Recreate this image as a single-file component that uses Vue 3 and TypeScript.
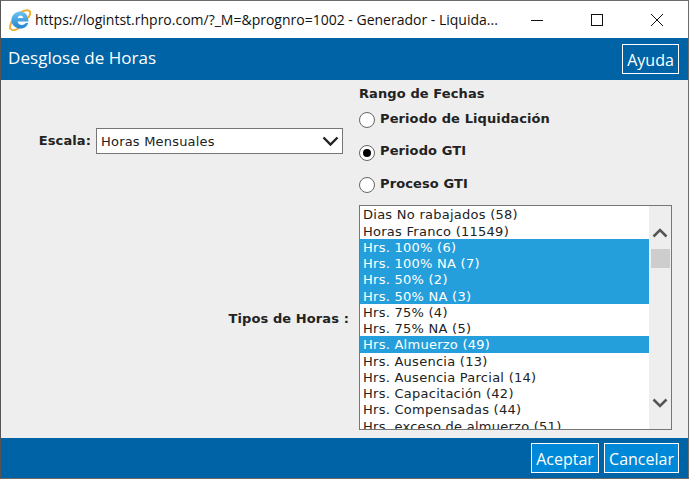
<script setup lang="ts">
const tipos = [
  { label: "Dias No rabajados (58)", sel: false },
  { label: "Horas Franco (11549)", sel: false },
  { label: "Hrs. 100% (6)", sel: true },
  { label: "Hrs. 100% NA (7)", sel: true },
  { label: "Hrs. 50% (2)", sel: true },
  { label: "Hrs. 50% NA (3)", sel: true },
  { label: "Hrs. 75% (4)", sel: false },
  { label: "Hrs. 75% NA (5)", sel: false },
  { label: "Hrs. Almuerzo (49)", sel: true },
  { label: "Hrs. Ausencia (13)", sel: false },
  { label: "Hrs. Ausencia Parcial (14)", sel: false },
  { label: "Hrs. Capacitación (42)", sel: false },
  { label: "Hrs. Compensadas (44)", sel: false },
  { label: "Hrs. exceso de almuerzo (51)", sel: false },
]

const rangos = [
  { label: "Periodo de Liquidación", checked: false },
  { label: "Periodo GTI", checked: true },
  { label: "Proceso GTI", checked: false },
]
</script>

<template>
  <div class="window">
    <div class="titlebar">
      <svg class="ie" width="22" height="22" viewBox="0 0 22 22">
        <defs>
          <linearGradient id="ieblue" x1="0" y1="0" x2="0" y2="1">
            <stop offset="0" stop-color="#6fc3f0" />
            <stop offset="1" stop-color="#2384d2" />
          </linearGradient>
        </defs>
        <path d="M1.500 20.500C0 17 3 11 7 7c5-5 11-7 13.500-5 1.500 1.500 0 5-1.500 7" fill="none" stroke="#efb02e" stroke-width="2" />
        <path d="M2 20c1.500 2 5 1 8-1" fill="none" stroke="#efb02e" stroke-width="1.800" />
        <path d="M2.500 11.500C2.500 6 6.500 2.500 11.200 2.500s8.300 3.500 8.300 10H8.700c.3 4 6 4.500 8 1.500h2.500c-1.500 5.500-8.300 7-12.500 4.300-2.700-1.600-4.200-4-4.200-6.800Zm6.200-2.500h5.600c-.3-3.500-5.100-3.500-5.600 0Z" fill="url(#ieblue)" fill-rule="evenodd" />
      </svg>
      <span class="url">https://logintst.rhpro.com/?_M=&amp;prognro=1002 - Generador - Liquida...</span>
      <div class="controls">
        <svg width="14" height="14" viewBox="0 0 14 14"><path d="M1 7.500h12" stroke="#111" fill="none" /></svg>
        <svg width="14" height="14" viewBox="0 0 14 14"><rect x="1.500" y="1.500" width="11" height="11" stroke="#111" fill="none" /></svg>
        <svg width="14" height="14" viewBox="0 0 14 14"><path d="M1 1l12 12M13 1L1 13" stroke="#111" fill="none" /></svg>
      </div>
    </div>

    <div class="header">
      <h1>Desglose de Horas</h1>
      <button class="btn help">Ayuda</button>
    </div>

    <div class="content">
      <div class="row-top">
        <div class="escala">
          <label>Escala:</label>
          <div class="select">
            <span>Horas Mensuales</span>
            <svg width="17" height="11" viewBox="0 0 17 11"><path d="M1.500 1.500L8.500 8.500l7-7" fill="none" stroke="#222" stroke-width="2.400" /></svg>
          </div>
        </div>
        <div class="rango">
          <div class="rango-title">Rango de Fechas</div>
          <div v-for="r in rangos" :key="r.label" class="radio-row">
            <span class="radio" :class="{ checked: r.checked }"></span>
            <span class="radio-text">{{ r.label }}</span>
          </div>
        </div>
      </div>

      <div class="row-list">
        <label>Tipos de Horas :</label>
        <div class="listbox">
          <div class="items">
            <div v-for="t in tipos" :key="t.label" class="item" :class="{ sel: t.sel }">{{ t.label }}</div>
          </div>
          <div class="scrollbar">
            <svg width="16" height="10" viewBox="0 0 16 10"><path d="M1.500 8.500L8 2l6.500 6.500" fill="none" stroke="#555" stroke-width="2.500" /></svg>
            <div class="thumb"></div>
            <svg class="down" width="16" height="10" viewBox="0 0 16 10"><path d="M1.500 1.500L8 8l6.500-6.500" fill="none" stroke="#555" stroke-width="2.500" /></svg>
          </div>
        </div>
      </div>
    </div>

    <div class="footer">
      <button class="btn action">Aceptar</button>
      <button class="btn action">Cancelar</button>
    </div>
  </div>
</template>

<style>
html, body {
  margin: 0;
  overflow: hidden;
}
</style>

<style scoped>
.window {
  width: 689px;
  height: 479px;
  box-sizing: border-box;
  border: 1px solid #6b6b6b;
  border-left-color: #555;
  display: flex;
  flex-direction: column;
  font-family: "DejaVu Sans", Verdana, sans-serif;
  font-size: 13px;
  color: #222;
  background: #eee;
}

.titlebar {
  height: 37px;
  flex-shrink: 0;
  background: #fff;
  display: flex;
  align-items: center;
  padding-left: 8px;
  font-family: "Open Sans", sans-serif;
  font-size: 14px;
  color: #111;
}

.ie {
  margin-right: 4px;
}

.url {
  white-space: nowrap;
  width: 465px;
  overflow: hidden;
}

.controls {
  margin-left: auto;
  display: flex;
  gap: 46px;
  padding-right: 24px;
}

.header {
  height: 42px;
  flex-shrink: 0;
  background: #0063a6;
  display: flex;
  align-items: center;
  justify-content: space-between;
  padding: 0 9px 0 7px;
}

h1 {
  margin: 0 0 3px;
  font-family: "Open Sans", sans-serif;
  font-weight: 400;
  font-size: 17px;
  letter-spacing: 0.05px;
  color: #fff;
}

.btn {
  font-family: "Open Sans", sans-serif;
  font-size: 16px;
  color: #fff;
  border: 1px solid #fff;
  padding: 1px 0 0;
  height: 30px;
}

.help {
  width: 57px;
  background: #0063a6;
}

.content {
  flex: 1;
  display: flex;
  flex-direction: column;
}

.row-top {
  display: flex;
  height: 125px;
  flex-shrink: 0;
}

.escala {
  width: 358px;
  display: flex;
  align-items: center;
  justify-content: flex-end;
  padding: 0 16px 3px 0;
  box-sizing: border-box;
  gap: 5px;
}

.escala label {
  margin-bottom: 2px;
}

label {
  font-weight: 700;
  letter-spacing: 0.1px;
  white-space: nowrap;
}

.select {
  width: 247px;
  height: 26px;
  box-sizing: border-box;
  border: 1px solid #767676;
  background: #fff;
  display: flex;
  align-items: center;
  justify-content: space-between;
  padding: 0 3px 0 4px;
  letter-spacing: 0.2px;
}

.rango {
  font-weight: 700;
  letter-spacing: 0.1px;
  padding-top: 5px;
}

.rango-title {
  height: 19px;
  line-height: 18px;
}

.radio-row {
  display: flex;
  align-items: center;
  gap: 5px;
  height: 32.500px;
}

.radio-text {
  position: relative;
  top: -2px;
}

.radio {
  width: 16px;
  height: 16px;
  box-sizing: border-box;
  border: 1px solid #666;
  border-radius: 50%;
  background: #fff;
  position: relative;
}

.radio.checked::after {
  content: "";
  position: absolute;
  left: 3px;
  top: 3px;
  width: 8px;
  height: 8px;
  border-radius: 50%;
  background: #000;
}

.row-list {
  display: flex;
  align-items: center;
  height: 225px;
  flex-shrink: 0;
}

.row-list label {
  width: 348px;
  text-align: right;
  margin-right: 10px;
  padding-top: 2px;
}

.listbox {
  width: 313px;
  height: 225px;
  box-sizing: border-box;
  border: 1px solid #767676;
  display: flex;
  background: #eee;
}

.items {
  width: 289px;
  background: #fff;
  overflow: hidden;
  padding-top: 0.300px;
}

.item {
  height: 16.250px;
  line-height: 18px;
  padding-left: 3px;
  letter-spacing: 0.26px;
  white-space: nowrap;
}

.item.sel {
  background: #259fdb;
  color: #fff;
}

.scrollbar {
  flex: 1;
  display: flex;
  flex-direction: column;
  align-items: center;
  padding-top: 22px;
  position: relative;
}

.thumb {
  width: 19px;
  height: 19px;
  background: #cdcdcd;
  margin-top: 11px;
}

.down {
  position: absolute;
  bottom: 21px;
}

.footer {
  height: 40px;
  flex-shrink: 0;
  background: #0063a6;
  display: flex;
  align-items: center;
  justify-content: flex-end;
  gap: 5px;
  padding-right: 9px;
}

.action {
  background: #0088d8;
  height: 30px;
  width: 68px;
}

.action:last-child {
  width: 75px;
}
</style>
